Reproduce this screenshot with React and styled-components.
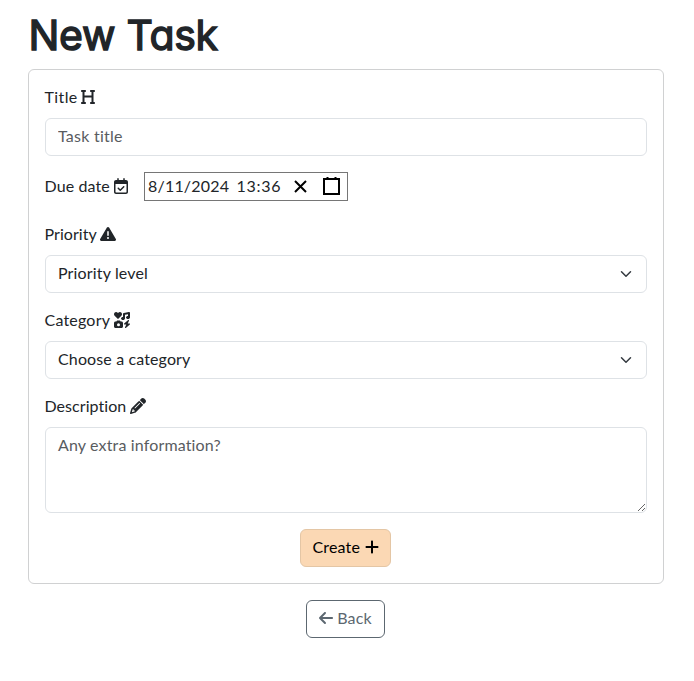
import React from "react";
import styled, { createGlobalStyle } from "styled-components";
import { FaHeading, FaRegCalendarCheck, FaTriangleExclamation, FaIcons, FaPencil, FaPlus, FaArrowLeft } from "react-icons/fa6";

const GlobalStyle = createGlobalStyle`
  *, *::before, *::after { box-sizing: border-box; }
  body {
    margin: 0;
    background: #fff;
    color: #212529;
    font: 400 16px/24px Lato, "Noto Sans", sans-serif;
  }
`;

const Page = styled.main`
  width: 636px;
  margin: 0 0 0 28px;
  padding-top: 11px;
  display: flex;
  flex-direction: column;
`;

const Heading = styled.h1`
  margin: 0 0 10px;
  height: 48px;
  padding-left: 0.5px;
  font: 400 41px/49px Inter, sans-serif;
  font-feature-settings: "cv11", "ss03";
  letter-spacing: -0.3px;
  white-space: nowrap;
  -webkit-text-stroke: 1.4px #212529;
  stroke-linejoin: round;
`;

const Card = styled.form`
  display: flex;
  flex-direction: column;
  height: 515px;
  padding: 16px 16px;
  border: 1px solid #d0d1d2;
  border-radius: 6px;
`;

const Field = styled.div`
  display: flex;
  flex-direction: column;
  gap: 8px;
  margin-bottom: 16px;
`;

const Label = styled.label`
  display: flex;
  align-items: center;
  height: 24px;
  margin-left: -0.5px;
  padding-bottom: ${(p) => (p.$raised ? 2 : 0)}px;
  svg { flex: none; margin-left: ${(p) => p.$gap || 3}px; }
`;

const Text = styled.span`
  flex: none;
  width: ${(p) => p.$width}px;
  letter-spacing: ${(p) => p.$spacing || 0}px;
  white-space: nowrap;
`;

const inputFrame = `
  width: 100%;
  border: 1px solid #dee2e6;
  border-radius: 6px;
  background: #fff;
  font: inherit;
`;

const TextInput = styled.input`
  ${inputFrame}
  height: 38px;
  padding: 4px 12px 8px;
  letter-spacing: 0.25px;
  &::placeholder { color: #595c5f; opacity: 1; }
`;

const Select = styled.div`
  ${inputFrame}
  display: flex;
  align-items: center;
  justify-content: space-between;
  height: 38px;
  padding: 0 12px 2px;
  svg { margin-top: 2px; }
`;

const TextArea = styled.textarea`
  ${inputFrame}
  display: block;
  height: 86px;
  padding: 5px 12px;
  resize: vertical;
  letter-spacing: 0.15px;
  &::placeholder { color: #595c5f; opacity: 1; }
`;

const DateRow = styled.div`
  display: flex;
  align-items: center;
  height: 29px;
  margin-bottom: 22px;
`;

const DatePicker = styled.div`
  display: flex;
  align-items: center;
  width: 204px;
  height: 29px;
  margin-left: 15.5px;
  padding: 0 0 1px 3px;
  border: 1px solid #767676;
  svg { flex: none; }
`;

const ClearIcon = styled.svg`
  margin-left: 9px;
`;

const CalendarIcon = styled.svg`
  margin: 0 0 2px 12px;
`;

const Button = styled.button`
  display: flex;
  align-items: center;
  align-self: center;
  justify-content: center;
  gap: ${(p) => (p.$primary ? 4 : 3)}px;
  width: ${(p) => p.$width}px;
  height: 38px;
  flex: none;
  padding: ${(p) => (p.$primary ? "0 0 2px 2px" : "0 0 2px")};
  font: inherit;
  border-radius: 6px;
  border: 1px solid ${(p) => (p.$primary ? "#e4c6a5" : "#5c6770")};
  background: ${(p) => (p.$primary ? "#fbd8b4" : "#fff")};
  color: ${(p) => (p.$primary ? "#000" : "#5c6770")};
  margin: ${(p) => (p.$primary ? "0 2px 0 0" : "16px 2px 0 0")};
  svg { flex: none; }
`;

const Chevron = () => (
  <svg width="16" height="12" viewBox="0 0 16 16">
    <path fill="none" stroke="#343a40" strokeLinecap="round" strokeLinejoin="round" strokeWidth="2" d="m2 5 6 6 6-6" />
  </svg>
);

export default function App() {
  return (
    <>
      <GlobalStyle />
      <Page>
        <Heading>New Task</Heading>
        <Card>
          <Field>
            <Label $raised $gap={2.5}><Text $width={33} $spacing={0.4}>Title</Text><FaHeading size={16} /></Label>
            <TextInput placeholder="Task title" />
          </Field>
          <DateRow>
            <Label $raised><Text $width={65} $spacing={0.1}>Due date</Text><FaRegCalendarCheck size={16} /></Label>
            <DatePicker>
              <Text $width={88.5} $spacing={0.2}>8/11/2024</Text>
              <Text $width={45} $spacing={0.75}>13:36</Text>
              <ClearIcon width="19" height="19" viewBox="0 0 19 19" stroke="#000" strokeWidth="2">
                <path d="M4 4 15 15M15 4 4 15" />
              </ClearIcon>
              <CalendarIcon width="19" height="19" viewBox="0 0 19 19" fill="none" stroke="#000" strokeWidth="2">
                <path d="M2 3H17V18H2ZM5.5 1V4M13.5 1V4" />
              </CalendarIcon>
            </DatePicker>
          </DateRow>
          <Field>
            <Label $raised><Text $width={52.5} $spacing={0.05}>Priority</Text><FaTriangleExclamation size={16} /></Label>
            <Select><Text $width={91} $spacing={0.15}>Priority level</Text><Chevron /></Select>
          </Field>
          <Field>
            <Label $raised><Text $width={66.5} $spacing={0.2}>Category</Text><FaIcons size={16} /></Label>
            <Select><Text $width={134} $spacing={0.13}>Choose a category</Text><Chevron /></Select>
          </Field>
          <Field>
            <Label $raised><Text $width={82.5} $spacing={0.05}>Description</Text><FaPencil size={16} /></Label>
            <TextArea placeholder="Any extra information?" />
          </Field>
          <Button type="button" $width={91} $primary><Text $width={47} $spacing={0.15}>Create</Text><FaPlus size={16} /></Button>
        </Card>
        <Button type="button" $width={79}><FaArrowLeft size={16} /><Text $width={35} $spacing={0.2}>Back</Text></Button>
      </Page>
    </>
  );
}
